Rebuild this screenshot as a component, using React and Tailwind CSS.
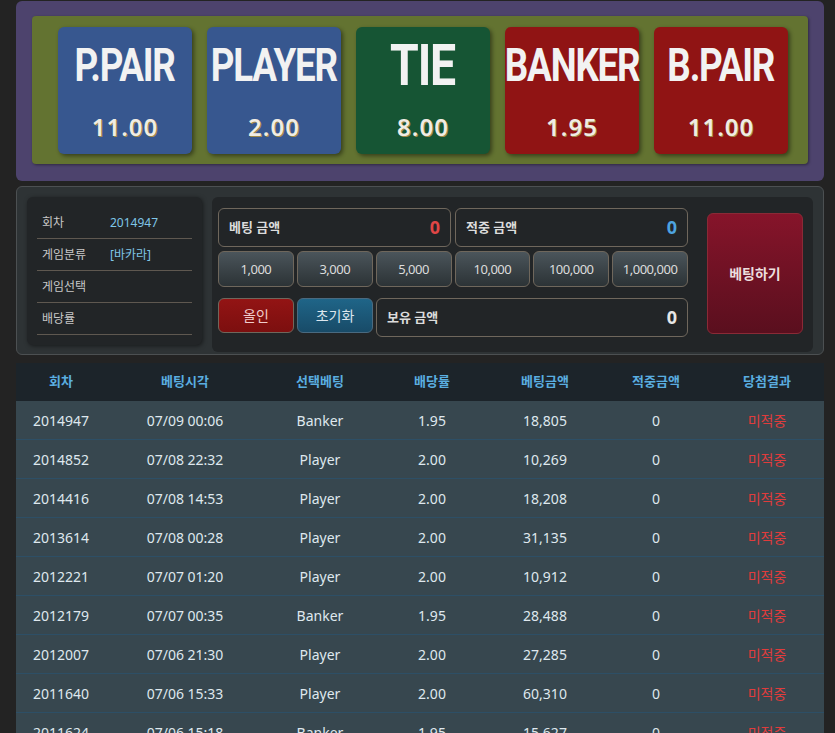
import React from 'react';

const cards = [
  { title: 'P.PAIR', odds: '11.00', bg: 'bg-[#37578f]', size: 'text-[46px]' },
  { title: 'PLAYER', odds: '2.00', bg: 'bg-[#37578f]', size: 'text-[46px]' },
  { title: 'TIE', odds: '8.00', bg: 'bg-[#165534]', size: 'text-[58px]' },
  { title: 'BANKER', odds: '1.95', bg: 'bg-[#901414]', size: 'text-[46px]' },
  { title: 'B.PAIR', odds: '11.00', bg: 'bg-[#901414]', size: 'text-[46px]' },
];

const chips = ['1,000', '3,000', '5,000', '10,000', '100,000', '1,000,000'];

const rows = [
  ['2014947', '07/09 00:06', 'Banker', '1.95', '18,805'],
  ['2014852', '07/08 22:32', 'Player', '2.00', '10,269'],
  ['2014416', '07/08 14:53', 'Player', '2.00', '18,208'],
  ['2013614', '07/08 00:28', 'Player', '2.00', '31,135'],
  ['2012221', '07/07 01:20', 'Player', '2.00', '10,912'],
  ['2012179', '07/07 00:35', 'Banker', '1.95', '28,488'],
  ['2012007', '07/06 21:30', 'Player', '2.00', '27,285'],
  ['2011640', '07/06 15:33', 'Player', '2.00', '60,310'],
  ['2011624', '07/06 15:18', 'Banker', '1.95', '15,627'],
];

const cols = 'grid grid-cols-[90px_158px_112px_112px_114px_108px_114px]';
const font = "font-['Noto_Sans','Noto_Sans_CJK_KR',sans-serif]";

const InfoRow = ({ label, value }) => (
  <div className="flex items-center h-[32px] border-b border-[#5f5850] pl-[5px]">
    <span className="w-[68px] text-[12px] text-[#c8c8c8]">{label}</span>
    <span className="text-[12px] text-[#7fc6e8]">{value}</span>
  </div>
);

const AmountBox = ({ label, value, valueColor, className = '' }) => (
  <div className={`flex items-center justify-between h-[39px] rounded-md border border-[#6f675c] px-[10px] ${className}`}>
    <span className="text-[13px] font-bold text-[#dcdcdc]">{label}</span>
    <span className={`text-[18px] font-bold ${valueColor}`}>{value}</span>
  </div>
);

export default function App() {
  return (
    <div className={`min-h-screen bg-[#232323] pl-4 pt-[1px] ${font}`}>
      <div className="w-[808px]">
        {/* odds board */}
        <div className="rounded-md bg-[#4d436d] px-4 pt-[15px] pb-[17px]">
          <div className="flex gap-[15px] rounded-sm bg-[#637331] pl-[26px] pt-[11px] pb-[10px] shadow-[1px_1px_3px_rgba(0,0,0,0.4)]">
            {cards.map(c => (
              <div key={c.title} className={`flex h-[127px] w-[134px] flex-col items-center rounded-md ${c.bg} shadow-[2px_2px_4px_rgba(0,0,0,0.45)]`}>
                <div className={`h-[76px] flex items-center font-['Roboto',sans-serif] font-bold text-[#f2f2f2] leading-none tracking-[-1.5px] scale-x-[0.8] ${c.size}`}>
                  {c.title}
                </div>
                <div className="mt-[6px] text-[24px] font-semibold tracking-[1px] text-[#f0ece4] [text-shadow:1px_1px_0_#a08a4a]">
                  {c.odds}
                </div>
              </div>
            ))}
          </div>
        </div>

        {/* bet panel */}
        <div className="mt-[5px] flex gap-[10px] rounded-md border border-[#4c5052] bg-[#2e3335] pl-[10px] pt-[10px] pb-[2px]">
          <div className="h-[148px] w-[175px] rounded-md bg-[#222527] px-[10px] pt-[10px] shadow-[1px_1px_4px_rgba(0,0,0,0.5)]">
            <InfoRow label="회차" value="2014947" />
            <InfoRow label="게임분류" value="[바카라]" />
            <InfoRow label="게임선택" value="" />
            <InfoRow label="배당률" value="" />
          </div>
          <div className="flex h-[155px] w-[601px] rounded-md bg-[#222527] pl-[6px] pt-[11px]">
            <div className="w-[470px]">
              <div className="flex gap-[4px]">
                <AmountBox label="베팅 금액" value="0" valueColor="text-[#e04646]" className="w-[233px]" />
                <AmountBox label="적중 금액" value="0" valueColor="text-[#4da3e0]" className="w-[233px]" />
              </div>
              <div className="mt-[4px] grid grid-cols-6 gap-[3px]">
                {chips.map(v => (
                  <button key={v} className="h-[36px] rounded-md border border-[#6f675c] bg-gradient-to-b from-[#4b555b] to-[#2c3336] pt-[2px] text-[13px] tracking-[-0.5px] text-[#dcdcdc]">
                    {v}
                  </button>
                ))}
              </div>
              <div className="mt-[11px] flex gap-[3px]">
                <button className="h-[35px] w-[76px] rounded-md border border-[#6f675c] bg-gradient-to-b from-[#931414] to-[#7c0f0f] text-[14px] text-[#f0cccc]">올인</button>
                <button className="h-[35px] w-[76px] rounded-md border border-[#4a6a80] bg-gradient-to-b from-[#1f6588] to-[#184b68] text-[14px] text-[#dce6ee]">초기화</button>
                <AmountBox label="보유 금액" value="0" valueColor="text-[#e6e6e6]" className="h-[35px] flex-1" />
              </div>
            </div>
            <button className="ml-[19px] mt-[5px] flex h-[121px] w-[96px] items-center justify-center rounded-md border border-[#8a2a36] bg-gradient-to-b from-[#86142a] to-[#5a0f1e] text-[14px] font-bold text-[#ecdede]">
              베팅하기
            </button>
          </div>
        </div>

        {/* history table */}
        <div className="mt-[8px]">
          <div className={`${cols} h-[38px] items-center bg-[#1c242a] text-[13px] font-bold text-[#5aaee0]`}>
            {['회차', '베팅시각', '선택베팅', '배당률', '베팅금액', '적중금액', '당첨결과'].map(h => (
              <div key={h} className="text-center">{h}</div>
            ))}
          </div>
          {rows.map(r => (
            <div key={r[0]} className={`${cols} h-[39px] items-center border-b border-[#2d4f66] bg-[#37474f] text-[14px] text-[#dfe8ee]`}>
              {r.map((c, i) => (
                <div key={i} className="text-center">{c}</div>
              ))}
              <div className="text-center">0</div>
              <div className="text-center text-[#e03c3c]">미적중</div>
            </div>
          ))}
        </div>
      </div>
    </div>
  );
}
